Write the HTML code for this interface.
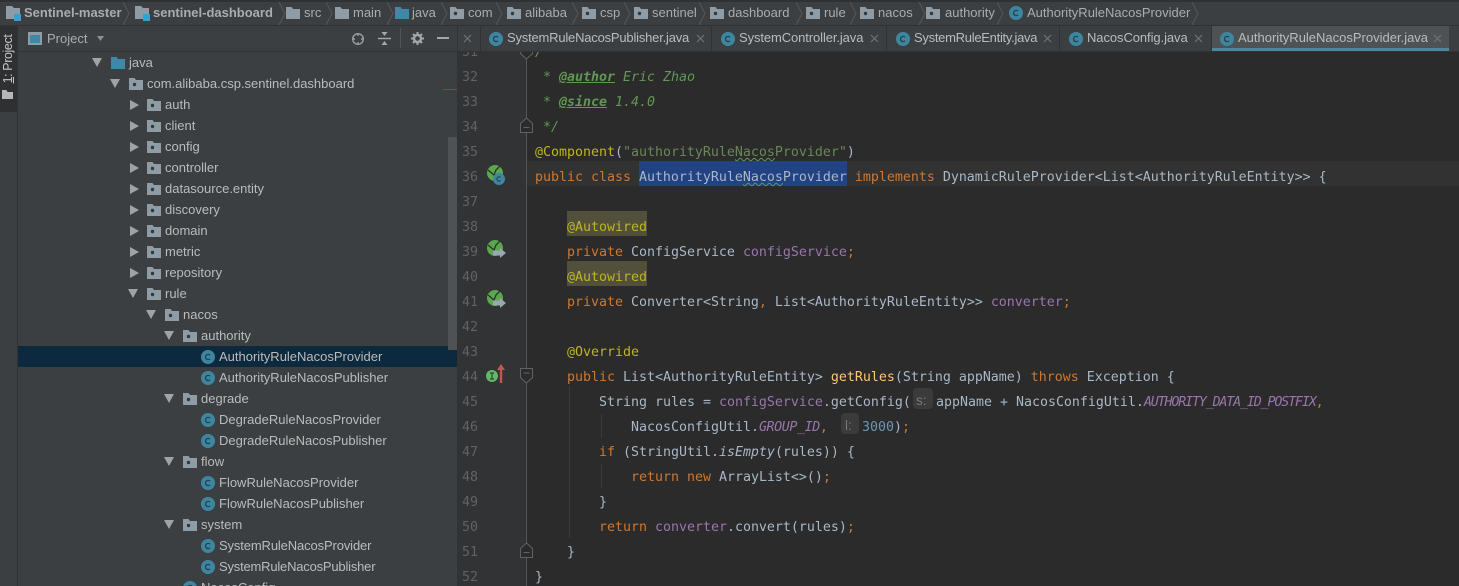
<!DOCTYPE html>
<html><head><meta charset="utf-8">
<style>
html,body{margin:0;padding:0;background:#3c3f41}
#r{position:relative;width:1459px;height:586px;overflow:hidden;background:#3c3f41;font-family:"Liberation Sans",sans-serif;font-size:13px;color:#bbbbbb}
.a{position:absolute}
.t{position:absolute;white-space:pre;line-height:21px;height:21px}
svg.i{position:absolute;overflow:visible}
.bc{position:absolute;top:2px;line-height:22px;white-space:pre;color:#a8adb0}
.tab{position:absolute;top:27px;line-height:22px;white-space:pre;color:#bbbbbb}
#ed{position:absolute;left:458px;top:52px;width:1001px;height:534px;background:#2b2b2b;overflow:hidden}
#g{position:absolute;left:0;top:0;width:69px;height:534px;background:#313335}
.n{position:absolute;left:0;margin-top:1px;width:20px;text-align:right;font-family:"DejaVu Sans Mono",monospace;font-size:13.29px;line-height:25px;color:#606366}
.l{position:absolute;margin-top:1px;white-space:pre;font-family:"DejaVu Sans Mono","Liberation Mono",monospace;font-size:13.29px;line-height:25px;height:25px;color:#a9b7c6}
.k{color:#cc7832}.an{color:#bbb529}.f{color:#9876aa}.d{color:#629755;font-style:italic}.s{color:#6a8759}.nu{color:#6897bb}.m{color:#ffc66d}
.w{text-decoration:underline wavy #629755 1px}
.tag{font-weight:bold;text-decoration:underline}
.fi{color:#9876aa;font-style:italic;letter-spacing:-1.13px}
.fg{color:#9876aa;font-style:italic;letter-spacing:-.38px}
</style></head><body><div id="r">
<svg width="0" height="0" style="position:absolute">
<defs>
<symbol id="pk" viewBox="0 0 14 12"><path d="M0 0h5.500l1.500 2h7v10H0z" fill="#8f9ca5"/><circle cx="5.500" cy="6.500" r="1.700" fill="#33383b"/></symbol>
<symbol id="fo" viewBox="0 0 14 12"><path d="M0 0h5.500l1.500 2h7v10H0z" fill="#8f9ca5"/></symbol>
<symbol id="bf" viewBox="0 0 14 12"><path d="M0 0h5.500l1.500 2h7v10H0z" fill="#3f88a8"/></symbol>
<symbol id="mod" viewBox="0 0 15 15"><path d="M0 0h6l2 2h6v11H0z" fill="#8f9ca5"/><rect x="8" y="8" width="7" height="7" fill="#389fd6"/></symbol>
<symbol id="c" viewBox="0 0 14 14"><circle cx="7" cy="7" r="7" fill="#3e86a0"/><path d="M9 5.200A2.600 2.600 0 1 0 9 8.800" fill="none" stroke="#23414f" stroke-width="1.300"/></symbol>
<symbol id="dn" viewBox="0 0 10 9"><path d="M0 0h10L5 9z" fill="#a0a3a5"/></symbol>
<symbol id="rt" viewBox="0 0 9 10"><path d="M0 0v10l9-5z" fill="#a0a3a5"/></symbol>
<symbol id="ch" viewBox="0 0 8 23"><path d="M0 0l6 11.500L0 23" fill="none" stroke="#55585a" stroke-width="1"/></symbol>
<symbol id="x" viewBox="0 0 9 9"><path d="M1 1l7 7M8 1L1 8" stroke="#6f7375" stroke-width="1.200" fill="none"/></symbol>
<symbol id="fd" viewBox="0 0 14 16"><path d="M.5 .5h12v9L6.500 15 .5 9.500z" fill="#2b2b2b" stroke="#606366"/><path d="M3.500 5h6" stroke="#606366"/></symbol>
<symbol id="fu" viewBox="0 0 14 16"><path d="M.5 15.500h12v-9L6.500 1 .5 6.500z" fill="#2b2b2b" stroke="#606366"/><path d="M3.500 10.500h6" stroke="#606366"/></symbol>
<symbol id="bean" viewBox="0 0 16 16"><circle cx="8" cy="8" r="8" fill="#5ba84c"/><path d="M1 5l6 5 2-5 4-4" stroke="#2f3133" stroke-width="1.300" fill="none"/></symbol>
</defs></svg>

<!-- breadcrumb -->
<div class="a" style="left:0;top:0;width:1459px;height:2px;background:#2f3234"></div>
<div class="a" style="left:0;top:25px;width:1459px;height:1px;background:#323232"></div>
<svg class="i" style="left:6px;top:6px" width="15" height="15"><use href="#mod"/></svg>
<div class="bc" style="left:24px;font-weight:bold">Sentinel-master</div>
<svg class="i" style="left:123px;top:2px" width="8" height="23"><use href="#ch"/></svg>
<svg class="i" style="left:135px;top:6px" width="15" height="15"><use href="#mod"/></svg>
<div class="bc" style="left:153px;font-weight:bold">sentinel-dashboard</div>
<svg class="i" style="left:279px;top:2px" width="8" height="23"><use href="#ch"/></svg>
<svg class="i" style="left:286px;top:7px" width="14" height="12"><use href="#fo"/></svg>
<div class="bc" style="left:304px">src</div>
<svg class="i" style="left:326px;top:2px" width="8" height="23"><use href="#ch"/></svg>
<svg class="i" style="left:335px;top:7px" width="14" height="12"><use href="#fo"/></svg>
<div class="bc" style="left:353px">main</div>
<svg class="i" style="left:387px;top:2px" width="8" height="23"><use href="#ch"/></svg>
<svg class="i" style="left:395px;top:7px" width="14" height="12"><use href="#bf"/></svg>
<div class="bc" style="left:412px">java</div>
<svg class="i" style="left:441px;top:2px" width="8" height="23"><use href="#ch"/></svg>
<svg class="i" style="left:450px;top:7px" width="14" height="12"><use href="#pk"/></svg>
<div class="bc" style="left:468px">com</div>
<svg class="i" style="left:496px;top:2px" width="8" height="23"><use href="#ch"/></svg>
<svg class="i" style="left:507px;top:7px" width="14" height="12"><use href="#pk"/></svg>
<div class="bc" style="left:525px">alibaba</div>
<svg class="i" style="left:572px;top:2px" width="8" height="23"><use href="#ch"/></svg>
<svg class="i" style="left:582px;top:7px" width="14" height="12"><use href="#pk"/></svg>
<div class="bc" style="left:600px">csp</div>
<svg class="i" style="left:624px;top:2px" width="8" height="23"><use href="#ch"/></svg>
<svg class="i" style="left:634px;top:7px" width="14" height="12"><use href="#pk"/></svg>
<div class="bc" style="left:652px">sentinel</div>
<svg class="i" style="left:699px;top:2px" width="8" height="23"><use href="#ch"/></svg>
<svg class="i" style="left:710px;top:7px" width="14" height="12"><use href="#pk"/></svg>
<div class="bc" style="left:728px">dashboard</div>
<svg class="i" style="left:796px;top:2px" width="8" height="23"><use href="#ch"/></svg>
<svg class="i" style="left:806px;top:7px" width="14" height="12"><use href="#pk"/></svg>
<div class="bc" style="left:824px">rule</div>
<svg class="i" style="left:850px;top:2px" width="8" height="23"><use href="#ch"/></svg>
<svg class="i" style="left:860px;top:7px" width="14" height="12"><use href="#pk"/></svg>
<div class="bc" style="left:878px">nacos</div>
<svg class="i" style="left:919px;top:2px" width="8" height="23"><use href="#ch"/></svg>
<svg class="i" style="left:926px;top:7px" width="14" height="12"><use href="#pk"/></svg>
<div class="bc" style="left:945px">authority</div>
<svg class="i" style="left:997px;top:2px" width="8" height="23"><use href="#ch"/></svg>
<svg class="i" style="left:1009px;top:6px" width="14" height="14"><use href="#c"/></svg>
<div class="bc" style="left:1027px">AuthorityRuleNacosProvider</div>
<svg class="i" style="left:1192px;top:2px" width="8" height="23"><use href="#ch"/></svg>

<!-- left strip -->
<div class="a" style="left:0;top:26px;width:17px;height:86px;background:#2e3032"></div>
<div class="a" style="left:17px;top:26px;width:1px;height:560px;background:#323232"></div>
<div class="a" style="left:-17px;top:51px;width:50px;height:16px;line-height:16px;text-align:center;transform:rotate(-90deg);white-space:pre;font-size:12.500px;letter-spacing:-.4px;color:#c4c6c8"><span style="text-decoration:underline">1</span>: Project</div>
<svg class="i" style="left:2px;top:90px" width="11" height="9" viewBox="0 0 11 9"><path d="M0 0h4.500l1 2H11v7H0z" fill="#b4b6b8"/></svg>

<!-- tool window header -->
<div class="a" style="left:18px;top:51px;width:440px;height:1px;background:#323232"></div>
<div class="a" style="left:28px;top:32px;width:10px;height:8px;border:2px solid #8f9ca5;border-top-width:3px;box-sizing:content-box;background:#3f88a8"></div>
<div class="t" style="left:47px;top:28px;color:#a8adb0;font-size:13px">Project</div>
<svg class="i" style="left:97px;top:36px" width="7" height="5" viewBox="0 0 7 5"><path d="M0 0h7L3.500 5z" fill="#8c8f91"/></svg>
<svg class="i" style="left:351px;top:32px" width="14" height="14" viewBox="0 0 14 14"><circle cx="7" cy="7" r="5.300" fill="none" stroke="#9a9da0" stroke-width="1.400"/><path d="M7 1v3M7 10v3M1 7h3M10 7h3" stroke="#9a9da0" stroke-width="1.400"/></svg>
<svg class="i" style="left:378px;top:32px" width="13" height="13" viewBox="0 0 13 13"><path d="M0 6.500h13" stroke="#a5a8aa" stroke-width="1.400"/><path d="M3.500 0h6L6.500 4zM3.500 13h6l-3-4z" fill="#a5a8aa"/></svg>
<div class="a" style="left:400px;top:28px;width:1px;height:20px;background:#515658"></div>
<svg class="i" style="left:411px;top:32px" width="13" height="13" viewBox="0 0 13 13"><circle cx="6.500" cy="6.500" r="3.500" fill="none" stroke="#a5a8aa" stroke-width="2.400"/><path d="M6.500 0v3M6.500 10v3M0 6.500h3M10 6.500h3M2 2l2 2M9 9l2 2M11 2L9 4M4 9l-2 2" stroke="#a5a8aa" stroke-width="2"/></svg>
<div class="a" style="left:437px;top:37px;width:12px;height:2px;background:#a5a8aa"></div>

<!-- tree -->
<div class="a" style="left:18px;top:346px;width:439px;height:21px;background:#0d293e"></div>
<div class="a" style="left:448px;top:137px;width:9px;height:213px;background:#4f5254"></div>
<div class="a" style="left:443px;top:89px;width:14px;height:1px;background:#b03030"></div>

<svg class="i" style="left:92px;top:58px" width="10" height="9"><use href="#dn"/></svg><svg class="i" style="left:111px;top:57px" width="14" height="12"><use href="#bf"/></svg><div class="t" style="left:129px;top:52px">java</div>
<svg class="i" style="left:110px;top:79px" width="10" height="9"><use href="#dn"/></svg><svg class="i" style="left:129px;top:78px" width="14" height="12"><use href="#pk"/></svg><div class="t" style="left:147px;top:73px">com.alibaba.csp.sentinel.dashboard</div>
<svg class="i" style="left:130px;top:100px" width="9" height="10"><use href="#rt"/></svg><svg class="i" style="left:147px;top:99px" width="14" height="12"><use href="#pk"/></svg><div class="t" style="left:165px;top:94px">auth</div>
<svg class="i" style="left:130px;top:121px" width="9" height="10"><use href="#rt"/></svg><svg class="i" style="left:147px;top:120px" width="14" height="12"><use href="#pk"/></svg><div class="t" style="left:165px;top:115px">client</div>
<svg class="i" style="left:130px;top:142px" width="9" height="10"><use href="#rt"/></svg><svg class="i" style="left:147px;top:141px" width="14" height="12"><use href="#pk"/></svg><div class="t" style="left:165px;top:136px">config</div>
<svg class="i" style="left:130px;top:163px" width="9" height="10"><use href="#rt"/></svg><svg class="i" style="left:147px;top:162px" width="14" height="12"><use href="#pk"/></svg><div class="t" style="left:165px;top:157px">controller</div>
<svg class="i" style="left:130px;top:184px" width="9" height="10"><use href="#rt"/></svg><svg class="i" style="left:147px;top:183px" width="14" height="12"><use href="#pk"/></svg><div class="t" style="left:165px;top:178px">datasource.entity</div>
<svg class="i" style="left:130px;top:205px" width="9" height="10"><use href="#rt"/></svg><svg class="i" style="left:147px;top:204px" width="14" height="12"><use href="#pk"/></svg><div class="t" style="left:165px;top:199px">discovery</div>
<svg class="i" style="left:130px;top:226px" width="9" height="10"><use href="#rt"/></svg><svg class="i" style="left:147px;top:225px" width="14" height="12"><use href="#pk"/></svg><div class="t" style="left:165px;top:220px">domain</div>
<svg class="i" style="left:130px;top:247px" width="9" height="10"><use href="#rt"/></svg><svg class="i" style="left:147px;top:246px" width="14" height="12"><use href="#pk"/></svg><div class="t" style="left:165px;top:241px">metric</div>
<svg class="i" style="left:130px;top:268px" width="9" height="10"><use href="#rt"/></svg><svg class="i" style="left:147px;top:267px" width="14" height="12"><use href="#pk"/></svg><div class="t" style="left:165px;top:262px">repository</div>
<svg class="i" style="left:128px;top:289px" width="10" height="9"><use href="#dn"/></svg><svg class="i" style="left:147px;top:288px" width="14" height="12"><use href="#pk"/></svg><div class="t" style="left:165px;top:283px">rule</div>
<svg class="i" style="left:146px;top:310px" width="10" height="9"><use href="#dn"/></svg><svg class="i" style="left:165px;top:309px" width="14" height="12"><use href="#pk"/></svg><div class="t" style="left:183px;top:304px">nacos</div>
<svg class="i" style="left:164px;top:331px" width="10" height="9"><use href="#dn"/></svg><svg class="i" style="left:183px;top:330px" width="14" height="12"><use href="#pk"/></svg><div class="t" style="left:201px;top:325px">authority</div>
<svg class="i" style="left:201px;top:350px" width="14" height="14"><use href="#c"/></svg><div class="t" style="left:219px;top:346px">AuthorityRuleNacosProvider</div>
<svg class="i" style="left:201px;top:371px" width="14" height="14"><use href="#c"/></svg><div class="t" style="left:219px;top:367px">AuthorityRuleNacosPublisher</div>
<svg class="i" style="left:164px;top:394px" width="10" height="9"><use href="#dn"/></svg><svg class="i" style="left:183px;top:393px" width="14" height="12"><use href="#pk"/></svg><div class="t" style="left:201px;top:388px">degrade</div>
<svg class="i" style="left:201px;top:413px" width="14" height="14"><use href="#c"/></svg><div class="t" style="left:219px;top:409px">DegradeRuleNacosProvider</div>
<svg class="i" style="left:201px;top:434px" width="14" height="14"><use href="#c"/></svg><div class="t" style="left:219px;top:430px">DegradeRuleNacosPublisher</div>
<svg class="i" style="left:164px;top:457px" width="10" height="9"><use href="#dn"/></svg><svg class="i" style="left:183px;top:456px" width="14" height="12"><use href="#pk"/></svg><div class="t" style="left:201px;top:451px">flow</div>
<svg class="i" style="left:201px;top:476px" width="14" height="14"><use href="#c"/></svg><div class="t" style="left:219px;top:472px">FlowRuleNacosProvider</div>
<svg class="i" style="left:201px;top:497px" width="14" height="14"><use href="#c"/></svg><div class="t" style="left:219px;top:493px">FlowRuleNacosPublisher</div>
<svg class="i" style="left:164px;top:520px" width="10" height="9"><use href="#dn"/></svg><svg class="i" style="left:183px;top:519px" width="14" height="12"><use href="#pk"/></svg><div class="t" style="left:201px;top:514px">system</div>
<svg class="i" style="left:201px;top:539px" width="14" height="14"><use href="#c"/></svg><div class="t" style="left:219px;top:535px;letter-spacing:-.13px">SystemRuleNacosProvider</div>
<svg class="i" style="left:201px;top:560px" width="14" height="14"><use href="#c"/></svg><div class="t" style="left:219px;top:556px;letter-spacing:-.2px">SystemRuleNacosPublisher</div>
<svg class="i" style="left:183px;top:581px" width="14" height="14"><use href="#c"/></svg><div class="t" style="left:201px;top:577px">NacosConfig</div>

<!-- tab strip -->
<div class="a" style="left:457px;top:26px;width:1px;height:560px;background:#323232"></div>
<div class="a" style="left:458px;top:51px;width:1001px;height:1px;background:#323232"></div>
<div class="a" style="left:1211px;top:26px;width:238px;height:25px;background:#4e5254"></div>
<div class="a" style="left:1211px;top:48px;width:238px;height:3px;background:#4a88a0"></div>
<div class="a" style="left:480px;top:26px;width:1px;height:25px;background:#323232"></div>
<div class="a" style="left:711px;top:26px;width:1px;height:25px;background:#323232"></div>
<div class="a" style="left:886px;top:26px;width:1px;height:25px;background:#323232"></div>
<div class="a" style="left:1059px;top:26px;width:1px;height:25px;background:#323232"></div>
<div class="a" style="left:1211px;top:26px;width:1px;height:25px;background:#323232"></div>
<svg class="i" style="left:463px;top:34px" width="9" height="9"><use href="#x"/></svg>
<svg class="i" style="left:489px;top:32px" width="14" height="14"><use href="#c"/></svg><div class="tab" style="left:507px;letter-spacing:-.2px">SystemRuleNacosPublisher.java</div><svg class="i" style="left:696px;top:34px" width="9" height="9"><use href="#x"/></svg>
<svg class="i" style="left:721px;top:32px" width="14" height="14"><use href="#c"/></svg><div class="tab" style="left:739px;letter-spacing:-.1px">SystemController.java</div><svg class="i" style="left:870px;top:34px" width="9" height="9"><use href="#x"/></svg>
<svg class="i" style="left:896px;top:32px" width="14" height="14"><use href="#c"/></svg><div class="tab" style="left:914px;letter-spacing:-.28px">SystemRuleEntity.java</div><svg class="i" style="left:1043px;top:34px" width="9" height="9"><use href="#x"/></svg>
<svg class="i" style="left:1069px;top:32px" width="14" height="14"><use href="#c"/></svg><div class="tab" style="left:1087px;letter-spacing:-.08px">NacosConfig.java</div><svg class="i" style="left:1194px;top:34px" width="9" height="9"><use href="#x"/></svg>
<svg class="i" style="left:1220px;top:32px" width="14" height="14"><use href="#c"/></svg><div class="tab" style="left:1238px">AuthorityRuleNacosProvider.java</div><svg class="i" style="left:1433px;top:34px" width="9" height="9"><use href="#x"/></svg>

<!-- editor -->
<div id="ed">
<div id="g"></div>
<div class="a" style="left:69px;top:109px;width:932px;height:25px;background:#323232"></div>
<div class="a" style="left:181px;top:109px;width:208px;height:25px;background:#214283"></div>
<div class="a" style="left:109px;top:159px;width:80px;height:25px;background:#52503a"></div>
<div class="a" style="left:109px;top:209px;width:80px;height:25px;background:#52503a"></div>
<div class="a" style="left:68px;top:0;width:1px;height:534px;background:#555555"></div>
<div class="a" style="left:111px;top:334px;width:1px;height:152px;background:#3b3b3b"></div>
<div class="a" style="left:143px;top:362px;width:1px;height:24px;background:#3b3b3b"></div>
<div class="a" style="left:143px;top:412px;width:1px;height:24px;background:#3b3b3b"></div>

<div class="n" style="top:-13px">31</div>
<div class="n" style="top:12px">32</div>
<div class="n" style="top:37px">33</div>
<div class="n" style="top:62px">34</div>
<div class="n" style="top:87px">35</div>
<div class="n" style="top:112px">36</div>
<div class="n" style="top:137px">37</div>
<div class="n" style="top:162px">38</div>
<div class="n" style="top:187px">39</div>
<div class="n" style="top:212px">40</div>
<div class="n" style="top:237px">41</div>
<div class="n" style="top:262px">42</div>
<div class="n" style="top:287px">43</div>
<div class="n" style="top:312px">44</div>
<div class="n" style="top:337px">45</div>
<div class="n" style="top:362px">46</div>
<div class="n" style="top:387px">47</div>
<div class="n" style="top:412px">48</div>
<div class="n" style="top:437px">49</div>
<div class="n" style="top:462px">50</div>
<div class="n" style="top:487px">51</div>
<div class="n" style="top:512px">52</div>

<svg class="i" style="left:62px;top:-8px" width="14" height="16"><use href="#fd"/></svg>
<svg class="i" style="left:62px;top:65px" width="14" height="16"><use href="#fu"/></svg>
<svg class="i" style="left:62px;top:316px" width="14" height="16"><use href="#fd"/></svg>
<svg class="i" style="left:62px;top:490px" width="14" height="16"><use href="#fu"/></svg>

<svg class="i" style="left:29px;top:113px" width="16" height="16"><use href="#bean"/></svg>
<svg class="i" style="left:35px;top:121px" width="12" height="12" viewBox="0 0 14 14"><circle cx="7" cy="7" r="7" fill="#3e86a0"/><path d="M9 5.200A2.600 2.600 0 1 0 9 8.800" fill="none" stroke="#23414f" stroke-width="1.300"/></svg>
<svg class="i" style="left:29px;top:188px" width="16" height="16"><use href="#bean"/></svg>
<svg class="i" style="left:35px;top:196px" width="13" height="10" viewBox="0 0 13 10"><path d="M0 2.500h7V0l6 5-6 5V7.500H0z" fill="#9aa7b0"/></svg>
<svg class="i" style="left:29px;top:238px" width="16" height="16"><use href="#bean"/></svg>
<svg class="i" style="left:35px;top:246px" width="13" height="10" viewBox="0 0 13 10"><path d="M0 2.500h7V0l6 5-6 5V7.500H0z" fill="#9aa7b0"/></svg>
<svg class="i" style="left:28px;top:318px" width="12" height="12" viewBox="0 0 12 12"><circle cx="6" cy="6" r="6" fill="#5fb865"/><path d="M4 3h4M6 3v6M4 9h4" stroke="#2b4a2e" stroke-width="1.200"/></svg>
<svg class="i" style="left:39px;top:312px" width="8" height="19" viewBox="0 0 8 19"><path d="M4 0l4 6H5.200v13H2.800V6H0z" fill="#c75450"/></svg>

<div class="l" style="left:77px;top:-13px;color:#629755;font-style:italic">/**</div>
<div class="l d" style="left:77px;top:12px"> * <span class="tag">@author</span> Eric Zhao</div>
<div class="l d" style="left:77px;top:37px"> * <span class="tag">@since</span> 1.4.0</div>
<div class="l d" style="left:77px;top:62px"> */</div>
<div class="l" style="left:77px;top:87px"><span class="an">@Component</span>(<span class="s">"authorityRule<span class="w">Nacos</span>Provider"</span>)</div>
<div class="l" style="left:77px;top:112px"><span class="k">public class</span> AuthorityRule<span class="w">Nacos</span>Provider <span class="k">implements</span> DynamicRuleProvider&lt;List&lt;AuthorityRuleEntity&gt;&gt; {</div>
<div class="l an" style="left:109px;top:162px">@Autowired</div>
<div class="l" style="left:109px;top:187px"><span class="k">private</span> ConfigService <span class="f">configService</span><span class="k">;</span></div>
<div class="l an" style="left:109px;top:212px">@Autowired</div>
<div class="l" style="left:109px;top:237px"><span class="k">private</span> Converter&lt;String<span class="k">,</span> List&lt;AuthorityRuleEntity&gt;&gt; <span class="f">converter</span><span class="k">;</span></div>
<div class="l an" style="left:109px;top:287px">@Override</div>
<div class="l" style="left:109px;top:312px"><span class="k">public</span> List&lt;AuthorityRuleEntity&gt; <span class="m">getRules</span>(String appName) <span class="k">throws</span> Exception {</div>
<div class="l" style="left:141px;top:337px">String rules = <span class="f">configService</span>.getConfig(</div>
<div class="a" style="left:455px;top:336px;width:20px;height:21px;background:#3b3b3b;border-radius:4px"></div>
<div class="l" style="left:458px;top:335px;color:#787878;font-family:'Liberation Sans',sans-serif;font-size:13.500px">s:</div>
<div class="l" style="left:478px;top:337px">appName + NacosConfigUtil.<span class="fi">AUTHORITY_DATA_ID_POSTFIX</span><span class="k">,</span></div>
<div class="l" style="left:173px;top:362px">NacosConfigUtil.<span class="fg">GROUP_ID</span><span class="k">,</span></div>
<div class="a" style="left:383px;top:361px;width:18px;height:21px;background:#3b3b3b;border-radius:4px"></div>
<div class="l" style="left:387px;top:360px;color:#787878;font-family:'Liberation Sans',sans-serif;font-size:13.500px">l:</div>
<div class="l" style="left:404px;top:362px"><span class="nu">3000</span>)<span class="k">;</span></div>
<div class="l" style="left:141px;top:387px"><span class="k">if</span> (StringUtil.<i>isEmpty</i>(rules)) {</div>
<div class="l" style="left:173px;top:412px"><span class="k">return new</span> ArrayList&lt;&gt;()<span class="k">;</span></div>
<div class="l" style="left:141px;top:437px">}</div>
<div class="l" style="left:141px;top:462px"><span class="k">return</span> <span class="f">converter</span>.convert(rules)<span class="k">;</span></div>
<div class="l" style="left:109px;top:487px">}</div>
<div class="l" style="left:77px;top:512px">}</div>
</div>
</div></body></html>
